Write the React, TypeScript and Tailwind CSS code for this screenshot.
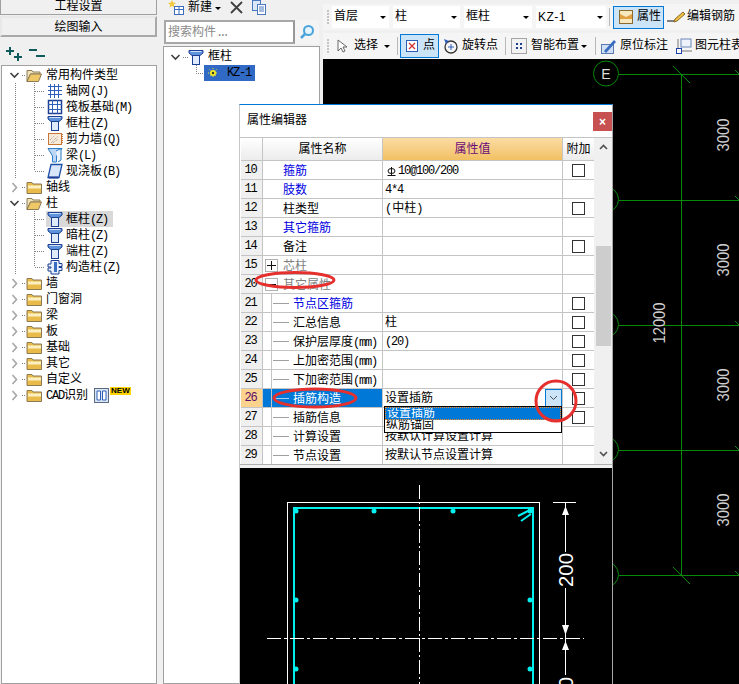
import React from "react";

function T({ children }: { children: string }) {
  const parts = children.split(/([\x00-\x7f]+)/).filter(Boolean);
  return (
    <>
      {parts.map((p, i) =>
        /^[\x00-\x7f]+$/.test(p) ? (
          <span key={i} className="tracking-[-1.2px]">{p}</span>
        ) : (
          <span key={i}>{p}</span>
        )
      )}
    </>
  );
}

const I = ({ children, w = 16, h = 16 }: { children: React.ReactNode; w?: number; h?: number }) => (
  <svg width={w} height={h} viewBox={`0 0 ${w} ${h}`} className="shrink-0 block">{children}</svg>
);

const ColumnIcon = () => (
  <I>
    <path d="M1 1.5h14v2.5l-3 2.5H4L1 4z" fill="#5f93dc" stroke="#1c3f94" />
    <path d="M2.5 2.5h11" stroke="#cfe0f8" />
    <rect x="4.5" y="6.5" width="7" height="9" fill="#dfeafb" stroke="#1c3f94" />
  </I>
);
const GridIcon = () => (
  <I>
    <path d="M1 3.5h14M1 7.5h14M1 11.5h14M3.5 1v14M7.5 1v14M11.5 1v14" stroke="#2c5fb8" />
  </I>
);
const RaftIcon = () => (
  <I>
    <rect x="1.5" y="1.5" width="13" height="13" fill="#fff" stroke="#1c3f94" strokeWidth="1.5" />
    <path d="M1 5.5h14M1 10.5h14M5.5 1v14M10.5 1v14" stroke="#2c5fb8" />
  </I>
);
const WallIcon = () => (
  <I>
    <rect x="1.5" y="2.5" width="13" height="11" fill="#f7ead8" stroke="#c8753a" />
    <path d="M4 12l7-7M6 12l5-4M3 9l4-4" stroke="#999" strokeDasharray="1 1" />
    <path d="M15 3v10" stroke="#c8753a" strokeDasharray="1 1" strokeWidth="2" />
  </I>
);
const BeamIcon = () => (
  <I>
    <path d="M1 1.5h14L9.5 9v6h-4V9z" fill="#bcd6f5" stroke="#2c7cc8" />
    <path d="M9 4l5-2.5V13l-3 2" fill="#e8f2fc" stroke="#2c7cc8" />
  </I>
);
const SlabIcon = () => (
  <I>
    <path d="M4 1.5h11l-3 13H1z" fill="#d8e8fa" stroke="#1c4fa8" strokeWidth="1.3" />
    <path d="M1.5 14.5h10" stroke="#1c3f94" strokeWidth="2" />
  </I>
);
const ConstructIcon = () => (
  <I>
    <path d="M4 1.5h8v3h3v3h-3v1h3v3h-3v3.5H4V12H1V9h3V8H1V5h3z" fill="#e6effb" stroke="#1c3f94" />
    <path d="M7 3h3v10H7" fill="#3a6cc0" />
  </I>
);
const FolderClosed = () => (
  <I>
    <path d="M1 3.5h5l1 1.5h8.5v9.5H1z" fill="#e8bb4a" stroke="#8b7a55" />
    <path d="M2 6.5h13v3H2z" fill="#fdf0c0" />
  </I>
);
const FolderOpen = () => (
  <I>
    <path d="M1 3.5h5l1 1.5h7v2H4.5L1 14.5z" fill="#f0e4b8" stroke="#8b7a55" />
    <path d="M4.5 7h11l-3 7.5H1z" fill="#eec766" stroke="#8b7a55" />
  </I>
);

function Gutter({ kind, lastChild, outer }: { kind: "root-open" | "root-closed" | "child"; lastChild?: boolean; outer?: boolean }) {
  if (kind === "child") {
    return (
      <svg width="44" height="16" viewBox="0 0 44 16" className="shrink-0 block">
        {outer && <path d="M13.5 0v16" stroke="#808080" strokeDasharray="1 1" />}
        <path d={lastChild ? "M32.5 0v8" : "M32.5 0v16"} stroke="#808080" strokeDasharray="1 1" />
        <path d="M33 8.5h10" stroke="#808080" strokeDasharray="1 1" />
      </svg>
    );
  }
  return (
    <svg width="24" height="16" viewBox="0 0 24 16" className="shrink-0 block">
      {kind === "root-open" ? (
        <path d="M8.5 6l4 4 4-4" fill="none" stroke="#404040" strokeWidth="1.6" />
      ) : (
        <path d="M10.5 4l4 4.5-4 4.5" fill="none" stroke="#a6a6a6" strokeWidth="1.6" />
      )}
      <path d="M20 8.5h4" stroke="#808080" strokeDasharray="1 1" />
    </svg>
  );
}

const Root = ({ label, open, extra }: { label: string; open?: boolean; extra?: React.ReactNode }) => (
  <div className="flex h-4 items-center">
    <Gutter kind={open ? "root-open" : "root-closed"} />
    {open ? <FolderOpen /> : <FolderClosed />}
    <span className="ml-[4px] whitespace-nowrap pt-[2px]"><T>{label}</T></span>
    {extra}
  </div>
);

const Child = ({ label, icon, last, active, outer }: { label: string; icon: React.ReactNode; last?: boolean; active?: boolean; outer?: boolean }) => (
  <div className="flex h-4 items-center">
    <Gutter kind="child" lastChild={last} outer={outer} />
    <div className={`flex h-4 items-center pl-px pr-[5px] ${active ? "bg-[#d9d9d9]" : ""}`}>
      {icon}
      <span className="ml-[3px] whitespace-nowrap pt-[2px]"><T>{label}</T></span>
    </div>
  </div>
);

function LeftPanel() {
  return (
    <div className="flex h-full w-[157px] shrink-0 flex-col">
      <div className="flex h-[15px] items-end justify-center border border-t-0 border-[#a0a0a0] bg-[#f0f0f0] leading-[14px]">工程设置</div>
      <div className="mt-px flex h-[21px] items-center justify-center border-2 border-[#a9a9a9] border-t-[#e8e8e8] border-l-[#e8e8e8] bg-[#f0f0f0] pt-[3px]">绘图输入</div>
      <div className="flex h-[28px] items-center gap-[7px] pl-[6px] pt-[6px]">
        <I>
          <path d="M4 1v8M0 5h8" stroke="#0f5a5a" strokeWidth="2" />
          <path d="M12 7v8M8 11h8" stroke="#0f5a5a" strokeWidth="2" />
        </I>
        <I>
          <path d="M0 4h8" stroke="#0f5a5a" strokeWidth="2" />
          <path d="M7 10h9" stroke="#0f5a5a" strokeWidth="2" />
        </I>
      </div>
      <div className="ml-px w-[156px] flex-1 border border-[#a0a0a0] bg-white pt-px">
        <Root label="常用构件类型" open />
        <Child outer label="轴网(J)" icon={<GridIcon />} />
        <Child outer label="筏板基础(M)" icon={<RaftIcon />} />
        <Child outer label="框柱(Z)" icon={<ColumnIcon />} />
        <Child outer label="剪力墙(Q)" icon={<WallIcon />} />
        <Child outer label="梁(L)" icon={<BeamIcon />} />
        <Child outer last label="现浇板(B)" icon={<SlabIcon />} />
        <Root label="轴线" />
        <Root label="柱" open />
        <Child outer active label="框柱(Z)" icon={<ColumnIcon />} />
        <Child outer label="暗柱(Z)" icon={<ColumnIcon />} />
        <Child outer label="端柱(Z)" icon={<ColumnIcon />} />
        <Child outer last label="构造柱(Z)" icon={<ConstructIcon />} />
        <Root label="墙" />
        <Root label="门窗洞" />
        <Root label="梁" />
        <Root label="板" />
        <Root label="基础" />
        <Root label="其它" />
        <Root label="自定义" />
        <Root
          label="CAD识别"
          extra={
            <div className="ml-[6px] flex items-start">
              <I w={15} h={15}>
                <rect x="0.5" y="0.5" width="14" height="14" fill="#dbe6f5" stroke="#5a6a80" />
                <path d="M3 3h3.5v9H3zM8.5 3H12v9H8.5z" fill="#fff" stroke="#2c5fb8" />
              </I>
              <span className="-mt-px ml-px bg-[#ffd400] px-px text-[8px] font-bold leading-[8px] font-['Liberation_Sans',sans-serif]">NEW</span>
            </div>
          }
        />
      </div>
    </div>
  );
}

function MiddlePanel() {
  return (
    <div className="flex h-full w-[157px] shrink-0 flex-col">
      <div className="flex h-[20px] items-center pl-[5px] pb-1">
        <I>
          <path d="M4 0l1.2 2.5L8 3 5.7 4.8 6.5 7.5 4 6 1.5 7.5l.8-2.7L0 3l2.8-.5z" fill="#f2c83c" />
          <rect x="6.5" y="6.5" width="9" height="8" fill="#fff" stroke="#3a6cc0" />
          <path d="M7 9.5h8M11 7v7" stroke="#3a6cc0" />
        </I>
        <span className="ml-1">新建</span>
        <span className="ml-[3px] mt-px h-0 w-0 border-x-[3px] border-t-[3px] border-x-transparent border-t-black" />
        <span className="ml-2 flex">
          <I>
            <path d="M2 2l11 11M13 2L2 13" stroke="#404040" strokeWidth="1.8" />
          </I>
        </span>
        <span className="ml-[6px] flex">
          <I>
            <rect x="1.5" y="0.5" width="8" height="10" fill="#dce8fa" stroke="#4a78c0" />
            <rect x="6.5" y="4.5" width="8" height="10" fill="#fff" stroke="#4a78c0" />
            <path d="M8 7h5M8 9h5M8 11h5" stroke="#4a78c0" />
          </I>
        </span>
      </div>
      <div className="flex h-[26px] pb-[2px] pl-px">
        <div className="flex w-[131px] items-center border-2 border-[#a8a8a8] border-r-[#989898] bg-white pl-[2px] pt-[2px] text-[#8a8a8a]">
          搜索构件<span className="tracking-[-4px]">...</span>
        </div>
        <div className="flex w-[24px] items-center justify-center bg-[#f4f4f4]">
          <I>
            <circle cx="9.5" cy="6.5" r="4.5" fill="#e6f4fc" stroke="#4aa4dc" strokeWidth="2" />
            <path d="M6 10l-4 4" stroke="#4aa4dc" strokeWidth="2.5" />
          </I>
        </div>
      </div>
      <div className="flex-1 border border-[#a0a0a0] bg-white pt-[2px]">
        <div className="flex h-4 items-center">
          <svg width="24" height="16" viewBox="0 0 24 16" className="block shrink-0">
            <path d="M7.5 6l4 4 4-4" fill="none" stroke="#404040" strokeWidth="1.6" />
            <path d="M19 8.5h5" stroke="#808080" strokeDasharray="1 1" />
          </svg>
          <ColumnIcon />
          <span className="ml-[4px]">框柱</span>
        </div>
        <div className="flex h-4 items-center">
          <svg width="40" height="16" viewBox="0 0 40 16" className="block shrink-0">
            <path d="M32.5 0v8.5H40" fill="none" stroke="#808080" strokeDasharray="1 1" />
          </svg>
          <div className="flex h-4 w-[51px] items-center bg-[#316ac5] pl-1 text-black">
            <I w={10} h={10}>
              <circle cx="5" cy="5" r="3" fill="#f6ee20" />
              <path d="M5 0v10M0 5h10M1.5 1.5l7 7M8.5 1.5l-7 7" stroke="#f6ee20" strokeDasharray="1 1" />
              <circle cx="5" cy="5" r="1.2" fill="#333" />
            </I>
            <span className="ml-[9px]"><T>KZ-1</T></span>
          </div>
        </div>
      </div>
    </div>
  );
}

const Sep = ({ cls = "mx-[3px]" }: { cls?: string }) => <span className={`h-[18px] w-px shrink-0 bg-[#b8b8b8] ${cls}`} />;
const Grip = () => (
  <span className="mr-[3px] flex shrink-0 flex-col gap-px">
    {[0, 1, 2, 3, 4].map((i) => (
      <span key={i} className="h-[2px] w-[2px] bg-[#c4c4c4]" />
    ))}
  </span>
);
const Arrow = ({ cls = "" }: { cls?: string }) => (
  <span className={`h-0 w-0 shrink-0 border-x-[3px] border-t-[3px] border-x-transparent border-t-black ${cls}`} />
);

const Combo = ({ label, w, sans }: { label: string; w: string; sans?: boolean }) => (
  <div className={`flex h-[22px] items-center justify-between bg-white pl-[2px] pr-[3px] ${w}`}>
    <span className={sans ? "font-['Liberation_Sans',sans-serif] tracking-[0.5px]" : ""}>{label}</span>
    <Arrow />
  </div>
);

function Toolbars() {
  return (
    <div className="shrink-0">
      <div className="mt-[4px] flex h-[26px] items-center overflow-hidden bg-[#f5f5f5] pl-[4px] whitespace-nowrap">
        <Grip />
        <div className="flex items-center gap-[4px]">
          <Combo label="首层" w="w-[57px]" />
          <Combo label="柱" w="w-[67px]" />
          <Combo label="框柱" w="w-[68px]" />
          <Combo label="KZ-1" w="w-[70px]" sans />
        </div>
        <Sep />
        <div className="flex h-[23px] w-[51px] shrink-0 items-center border border-[#0078d7] bg-[#cce4f7] pl-[4px]">
          <I>
            <rect x="1.5" y="1.5" width="13" height="13" fill="#f7e8c0" stroke="#8a6a30" />
            <path d="M2 5l6 3 6-3v5H2z" fill="#e0a040" />
          </I>
          <span className="ml-[3px]">属性</span>
        </div>
        <div className="ml-[3px] flex shrink-0 items-center">
          <I w={18} h={16}>
            <path d="M8 10l8-7 2 2-8 7-3 1z" fill="#f0c040" stroke="#8a6a30" />
            <path d="M0 12h7" stroke="#333" strokeWidth="1.2" />
          </I>
          <span className="ml-[2px]">编辑钢筋</span>
        </div>
      </div>
      <div className="mt-[3px] flex h-[26px] items-center overflow-hidden bg-[#f5f5f5] pl-[4px] whitespace-nowrap">
        <Grip />
        <span className="ml-[4px]">
          <I w={12} h={16}>
            <path d="M2 2v11l3-3 2 4 2-1-2-4h4z" fill="#fff" stroke="#666" />
          </I>
        </span>
        <span className="ml-[6px]">选择</span>
        <Arrow cls="ml-[6px]" />
        <Sep cls="ml-[7px] mr-[2px]" />
        <div className="flex h-[24px] w-[39px] shrink-0 items-center border border-[#0078d7] bg-[#cce4f7] pl-[5px]">
          <I w={12} h={12}>
            <rect x="0.5" y="0.5" width="11" height="11" fill="#fff" stroke="#2c5fb8" />
            <path d="M3 3l6 6M9 3l-6 6" stroke="#d03030" strokeWidth="1.3" />
          </I>
          <span className="ml-[5px]">点</span>
        </div>
        <span className="ml-[4px]">
          <I>
            <circle cx="8" cy="9" r="6" fill="none" stroke="#333" strokeWidth="1.3" />
            <path d="M5 9h6M8 6v6" stroke="#2c5fb8" />
            <path d="M1 1l2 5 3-3z" fill="#2c5fb8" />
          </I>
        </span>
        <span className="ml-[3px]">旋转点</span>
        <Sep cls="ml-[7px] mr-[3px]" />
        <span className="ml-[2px]">
          <I>
            <rect x="0.5" y="0.5" width="15" height="15" fill="#f2f2f2" stroke="#555" strokeDasharray="1 1" />
            <path d="M5 5h2v2H5zM9 5h2v2H9zM5 9h2v2H5zM9 9h2v2H9z" fill="#1c3f94" />
          </I>
        </span>
        <span className="ml-[4px]">智能布置</span>
        <Arrow cls="ml-[2px]" />
        <Sep cls="ml-[8px] mr-[2px]" />
        <span className="ml-[2px]">
          <I w={17} h={17}>
            <rect x="1.5" y="6.5" width="12" height="9" fill="#cfdff4" stroke="#5a7ab0" />
            <path d="M4 13L14 2l2 2L6 15z" fill="#3a6cc0" />
          </I>
        </span>
        <span className="ml-[3px]">原位标注</span>
        <span className="ml-[8px]">
          <I>
            <rect x="0.5" y="10.5" width="5" height="5" fill="#fff" stroke="#1c3fa8" />
            <path d="M2 1v9M6 13h10" stroke="#777" />
            <rect x="5" y="1" width="10" height="8" fill="#eef3fb" stroke="#6a86b8" />
          </I>
        </span>
        <span className="ml-[3px]">图元柱表</span>
      </div>
    </div>
  );
}

function CadCanvas() {
  const ys = [74, 200, 325, 450, 575];
  return (
    <div className="min-h-0 flex-1 overflow-hidden bg-black">
      <svg width="416" height="625" viewBox="323 59 416 625" className="block">
        {ys.map((y) => (
          <g key={y} stroke="#078a07" fill="none">
            <circle cx="606" cy={y - 0.5} r="12.5" />
            <path d={`M619 ${y + 0.5}H739`} />
            <path d={`M735 ${y - 4}l4 4`} />
          </g>
        ))}
        <path d="M681.5 74V575M673 66l17 17M673 567l17 17" stroke="#078a07" fill="none" />
        <text x="606" y="79" textAnchor="middle" fontSize="14" fill="#ddd" fontFamily="Liberation Sans, sans-serif">E</text>
        {[135, 260, 385, 510].map((y) => (
          <text key={y} transform={`translate(729 ${y}) rotate(-90)`} textAnchor="middle" fontSize="16" fill="#cfcfcf" fontFamily="Liberation Sans, sans-serif" textLength="33" lengthAdjust="spacingAndGlyphs">3000</text>
        ))}
        <text transform="translate(665 323) rotate(-90)" textAnchor="middle" fontSize="16" fill="#cfcfcf" fontFamily="Liberation Sans, sans-serif" textLength="41" lengthAdjust="spacingAndGlyphs">12000</text>
      </svg>
    </div>
  );
}

type Row = {
  n: string;
  name?: string;
  blue?: boolean;
  val?: React.ReactNode;
  chk?: boolean;
  kind?: "plain" | "plus" | "minus" | "sub";
};

const rows: Row[] = [
  {
    n: "10",
    name: "箍筋",
    blue: true,
    chk: true,
    val: (
      <span className="flex items-center">
        <svg width="12" height="12" viewBox="0 0 12 12" className="mr-px block shrink-0">
          <path d="M6.5 2v8M2.5 10.5h8" stroke="#111" />
          <ellipse cx="6.5" cy="6" rx="3.5" ry="2.5" fill="none" stroke="#111" />
        </svg>
        <T>10@100/200</T>
      </span>
    ),
  },
  { n: "11", name: "肢数", blue: true, val: <T>4*4</T> },
  { n: "12", name: "柱类型", chk: true, val: "(中柱)" },
  { n: "13", name: "其它箍筋", blue: true },
  { n: "14", name: "备注", chk: true },
  { n: "15", name: "芯柱", kind: "plus" },
  { n: "20", name: "其它属性", kind: "minus" },
  { n: "21", name: "节点区箍筋", blue: true, kind: "sub", chk: true },
  { n: "22", name: "汇总信息", kind: "sub", chk: true, val: "柱" },
  { n: "23", name: "保护层厚度(mm)", kind: "sub", chk: true, val: <T>(20)</T> },
  { n: "24", name: "上加密范围(mm)", kind: "sub", chk: true },
  { n: "25", name: "下加密范围(mm)", kind: "sub", chk: true },
  { n: "26", name: "插筋构造", kind: "sub", chk: true, val: "设置插筋" },
  { n: "27", name: "插筋信息", kind: "sub", chk: true },
  { n: "28", name: "计算设置", kind: "sub", val: "按默认计算设置计算" },
  { n: "29", name: "节点设置", kind: "sub", val: "按默认节点设置计算" },
];

function GridRow({ r }: { r: Row }) {
  const sel = r.n === "26";
  const color = sel ? "text-white" : r.kind === "plus" || r.kind === "minus" ? "text-[#808080]" : r.blue ? "text-[#0000e0]" : "text-black";
  return (
    <div className="flex h-[19px] border-b border-[#c4c4c4]">
      <div className={`flex w-[22px] shrink-0 items-center justify-center border-r border-[#c4c4c4] pr-[2px] ${sel ? "bg-[#fbd38d] text-[#5a0a6a]" : "bg-[#f0f0f0]"}`}>
        <T>{r.n}</T>
      </div>
      <div className={`flex w-[120px] shrink-0 items-center border-r border-[#c4c4c4] ${color} ${sel ? "bg-[#0078d7]" : ""}`}>
        {r.kind === "sub" ? (
          <>
            <span className="ml-[8px] h-full w-px shrink-0 bg-[#c4c4c4]" />
            <span className={`ml-px h-px w-[16px] shrink-0 ${sel ? "bg-[#a8d0f0]" : "bg-[#a0a0a0]"}`} />
            <span className="ml-[4px] whitespace-nowrap pt-[3px]"><T>{r.name!}</T></span>
          </>
        ) : r.kind === "plus" || r.kind === "minus" ? (
          <>
            <span className="ml-[2px] flex h-[13px] w-[13px] shrink-0 items-center justify-center border border-[#b0b0b0] bg-white">
              <svg width="9" height="9" viewBox="0 0 9 9" className="block">
                <path d={r.kind === "plus" ? "M0 4.5h9M4.5 0v9" : "M0 4.5h9"} stroke="#111" />
              </svg>
            </span>
            <span className="ml-[5px] pt-[3px]">{r.name}</span>
          </>
        ) : (
          <span className="ml-[20px] pt-[3px]">{r.name}</span>
        )}
      </div>
      <div className="flex w-[180px] shrink-0 items-center justify-between border-r border-[#c4c4c4] pl-[2px]">
        <span className="flex items-center pt-[2px]">{r.val}</span>
        {sel && (
          <span className="flex h-[18px] w-[17px] items-center justify-center border border-[#0078d7] bg-[#cce4f7]">
            <svg width="9" height="6" viewBox="0 0 9 6" className="block">
              <path d="M1 1l3.5 3.5L8 1" fill="none" stroke="#505050" />
            </svg>
          </span>
        )}
      </div>
      <div className="flex w-[31px] shrink-0 items-center justify-center">
        {r.chk && <span className="h-[13px] w-[13px] border border-[#333] bg-white" />}
      </div>
    </div>
  );
}

function Preview() {
  const dots: [number, number][] = [
    [296, 511], [374, 511], [453, 511], [530, 511],
    [296, 600], [530, 600], [296, 669], [530, 669],
  ];
  return (
    <div className="min-h-0 flex-1 overflow-hidden bg-black">
      <svg width="373" height="216" viewBox="240 468 373 216" className="block">
        <rect x="287.5" y="502.5" width="252" height="300" fill="none" stroke="#fff" />
        <rect x="294" y="508" width="239" height="300" fill="none" stroke="#00f0f0" strokeWidth="2" />
        {dots.map(([x, y]) => (
          <circle key={`${x}-${y}`} cx={x} cy={y} r="2.5" fill="#00f0f0" />
        ))}
        <path d="M518 516l12-6M521 521l10-7" stroke="#00f0f0" strokeWidth="2" />
        <path d="M419.5 485V638" stroke="#fff" strokeDasharray="14 3 2 3" />
        <path d="M419.5 638V684" stroke="#fff" strokeDasharray="14 3 2 3" />
        <path d="M267 638.5H584" stroke="#fff" strokeDasharray="14 3 3 3" />
        <path d="M553 502.5h23M565.5 503V638M565.5 638V684" stroke="#fff" />
        <path d="M565.5 506l-3.5 9h7zM565.5 635l-3.5-10h7zM565.5 641l-3.5 9h7z" fill="#fff" />
        <rect x="555" y="552" width="21" height="36" fill="#000" />
        <rect x="555" y="675" width="21" height="12" fill="#000" />
        <text transform="translate(572.5 570) rotate(-90)" textAnchor="middle" fontSize="20" fill="#fff" fontFamily="Liberation Sans, sans-serif" textLength="34" lengthAdjust="spacingAndGlyphs">200</text>
        <text transform="translate(572.5 694) rotate(-90)" textAnchor="middle" fontSize="20" fill="#fff" fontFamily="Liberation Sans, sans-serif" textLength="34" lengthAdjust="spacingAndGlyphs">200</text>
      </svg>
    </div>
  );
}

function Dialog() {
  return (
    <div className="absolute left-[239px] top-[104px] flex h-[580px] w-[374px] flex-col overflow-hidden border-l border-r border-t border-l-[#c8c8c8] border-r-[#a8a8a8] border-t-[#0078d7] bg-white">
      <div className="flex h-[32px] shrink-0 items-start justify-between">
        <span className="ml-[7px] mt-[10px]">属性编辑器</span>
        <span className="mt-[7px] flex h-[19px] w-[19px] items-center justify-center bg-[#c75050] text-[12px] font-bold leading-none text-white font-['Liberation_Sans',sans-serif]">×</span>
      </div>
      <div className="flex h-[327px] shrink-0 border-t border-[#c4c4c4]">
        <div className="w-[354px] shrink-0 pl-px">
          <div className="flex h-[23px] border-b border-[#c4c4c4]">
            <div className="w-[22px] shrink-0 border-r border-[#c4c4c4] bg-gradient-to-b from-white to-[#ececec]" />
            <div className="flex w-[120px] shrink-0 items-center justify-center border-r border-[#c4c4c4] bg-gradient-to-b from-white to-[#ececec] pt-[2px]">属性名称</div>
            <div className="flex w-[180px] shrink-0 items-center justify-center border-r border-[#c4c4c4] bg-gradient-to-b from-[#fbdca3] to-[#f2c062] pt-[2px] text-[#6a0a7a]">属性值</div>
            <div className="flex w-[31px] shrink-0 items-center justify-center bg-gradient-to-b from-white to-[#ececec] pt-[2px]">附加</div>
          </div>
          {rows.map((r) => (
            <GridRow key={r.n} r={r} />
          ))}
        </div>
        <div className="flex w-[18px] shrink-0 flex-col items-center bg-[#f0f0f0] pb-[7px] pt-[6px]">
          <svg width="9" height="6" viewBox="0 0 9 6" className="block shrink-0">
            <path d="M1 5l3.5-3.5L8 5" fill="none" stroke="#505050" strokeWidth="1.6" />
          </svg>
          <span className="mt-[96px] h-[100px] w-[15px] shrink-0 bg-[#cdcdcd]" />
          <svg width="9" height="6" viewBox="0 0 9 6" className="mt-auto block shrink-0">
            <path d="M1 1l3.5 3.5L8 1" fill="none" stroke="#505050" strokeWidth="1.6" />
          </svg>
        </div>
      </div>
      <div className="h-[4px] shrink-0 border-t border-[#b0b0b0] bg-[#f0f0f0]" />
      <Preview />
      <div className="absolute left-[144px] top-[301px] w-[178px] border border-black bg-white leading-[12px]">
        <div className="h-[13px] overflow-hidden border border-dotted border-[#ff9020] bg-[#0078d7] pl-px text-white">设置插筋</div>
        <div className="h-[12px] overflow-hidden pl-[1px]">纵筋锚固</div>
      </div>
      <svg width="374" height="580" viewBox="239 104 374 580" className="pointer-events-none absolute left-[-1px] top-[-1px]">
        <g fill="none" stroke="#e6302e" strokeWidth="3">
          <ellipse cx="295" cy="280" rx="39" ry="7.5" />
          <ellipse cx="315" cy="398" rx="41" ry="9" />
          <circle cx="556" cy="401" r="20" />
        </g>
      </svg>
    </div>
  );
}

export default function App() {
  return (
    <div className="relative flex h-[684px] w-[739px] overflow-hidden bg-[#f0f0f0] text-[12px] leading-none text-black font-['Liberation_Mono','Noto_Sans_CJK_SC',monospace]">
      <LeftPanel />
      <div className="w-[6px] shrink-0" />
      <MiddlePanel />
      <div className="w-[3px] shrink-0" />
      <div className="flex h-full min-w-0 flex-1 flex-col">
        <Toolbars />
        <CadCanvas />
      </div>
      <Dialog />
    </div>
  );
}
